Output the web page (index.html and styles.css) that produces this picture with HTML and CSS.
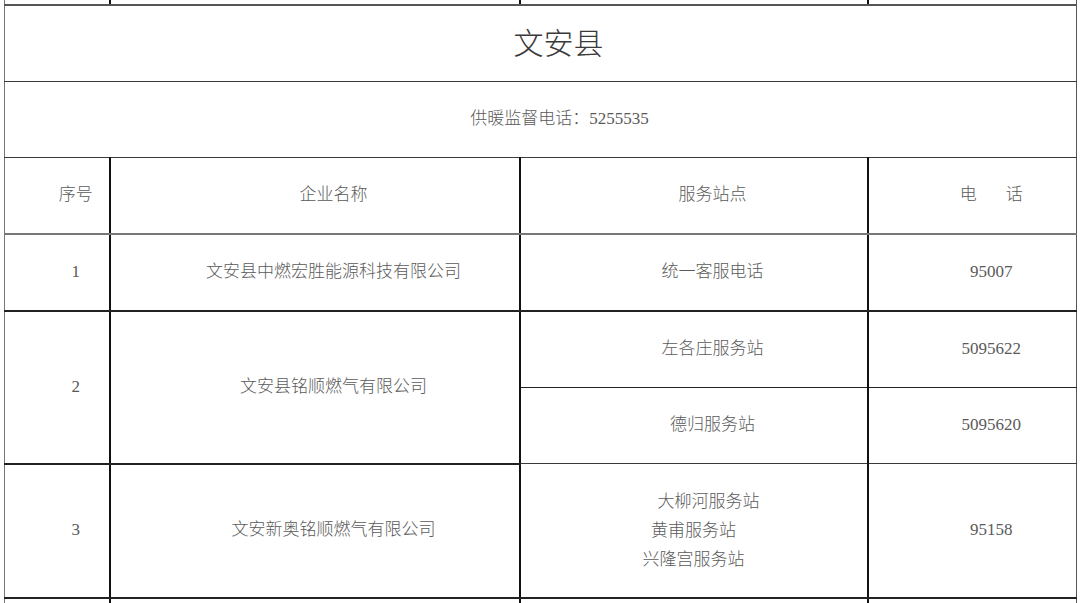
FILE: index.html
```html
<!DOCTYPE html>
<html lang="zh-CN">
<head>
<meta charset="utf-8">
<title>文安县</title>
<link rel="stylesheet" href="styles.css">
</head>
<body>
<table class="sheet">
  <colgroup>
    <col class="c-no">
    <col class="c-name">
    <col class="c-site">
    <col class="c-tel">
  </colgroup>
  <tr class="r-prev"><td></td><td></td><td></td><td></td></tr>
  <tr class="r-title"><td colspan="4" class="title">文安县</td></tr>
  <tr class="r-std"><td colspan="4" class="sub">供暖监督电话：5255535</td></tr>
  <tr class="r-std r-head">
    <td>序号</td>
    <td>企业名称</td>
    <td>服务站点</td>
    <td>电<span class="gap"></span>话</td>
  </tr>
  <tr class="r-std r-one">
    <td>1</td>
    <td>文安县中燃宏胜能源科技有限公司</td>
    <td>统一客服电话</td>
    <td>95007</td>
  </tr>
  <tr class="r-std r-two">
    <td rowspan="2">2</td>
    <td rowspan="2">文安县铭顺燃气有限公司</td>
    <td>左各庄服务站</td>
    <td>5095622</td>
  </tr>
  <tr class="r-std r-twob">
    <td class="site-b">德归服务站</td>
    <td>5095620</td>
  </tr>
  <tr class="r-three">
    <td>3</td>
    <td>文安新奥铭顺燃气有限公司</td>
    <td class="multi"><div class="ln ln-first">大柳河服务站</div><div class="ln">黄甫服务站</div><div class="ln">兴隆宫服务站</div></td>
    <td>95158</td>
  </tr>
  <tr class="r-next"><td></td><td></td><td></td><td></td></tr>
</table>
</body>
</html>
```
FILE: styles.css
```css
html, body {
  margin: 0;
  padding: 0;
  background: #ffffff;
  overflow: hidden;
}
body {
  font-family: "Liberation Serif", "Noto Sans CJK SC", serif;
  font-weight: 300;
  color: #5a5a5a;
  font-size: 17px;
}
.sheet {
  margin-left: 4px;
  width: 1072px;
  table-layout: fixed;
  border-collapse: collapse;
}
.c-no { width: 105px; }
.c-name { width: 410px; }
.c-site { width: 348px; }
.c-tel { width: 209px; }
.sheet td {
  border: 1px solid #3a3a3a;
  padding: 0 0 0 38px;
  text-align: center;
  vertical-align: middle;
  line-height: 1.2;
}
.sheet td + td { border-left: 2px solid #111; }
.sheet tr > td:first-child { border-left: 1px solid #777; }
.sheet tr > td:last-child { border-right: 1px solid #555; }
.sheet .r-two td:nth-child(3), .sheet .r-two td:nth-child(4) { border-left: 2px solid #111; }
.sheet .r-twob td.site-b { border-left: 2px solid #111; }
.r-prev td { height: 4px; border-top: 0; border-bottom: 2px solid #555; }
.r-title td { height: 75px; }
.sheet .title { font-size: 30px; color: #3a3a3a; padding-left: 36px; }
.r-std td { height: 75px; }
.r-head td { border-bottom: 2px solid #777; border-top: 1px solid #555; }
.r-one td { border-bottom: 2px solid #222; }
.r-two td { border-bottom: 2px solid #222; }
.r-two td:nth-child(3), .r-two td:nth-child(4) { border-bottom: 1px solid #222; }
.r-three td { height: 132px; border-bottom: 2px solid #222; }
.r-next td { height: 10px; border-bottom: 0; }
.gap { display: inline-block; width: 29px; }
.sheet .multi { padding-left: 0; }
.multi .ln { line-height: 29px; }
.multi .ln-first { padding-left: 30px; }
```
